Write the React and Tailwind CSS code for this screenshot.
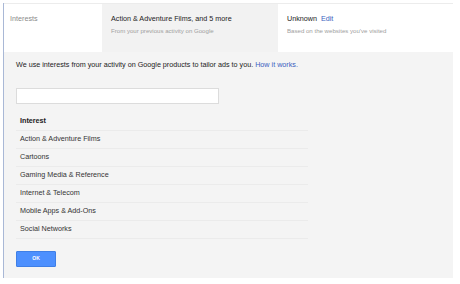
const interests = [
  'Action & Adventure Films',
  'Cartoons',
  'Gaming Media & Reference',
  'Internet & Telecom',
  'Mobile Apps & Add-Ons',
  'Social Networks',
];

export default function App() {
  return (
    <div className="w-[460px] h-[284px] bg-white pt-[3px] pl-[3px] font-['Liberation_Sans',Arial,sans-serif]">
      <div className="w-[450px] h-[275px] border-l border-[#a9b8d6] bg-[#f4f4f4] flex flex-col">
        {/* tabs */}
        <div className="flex h-[49px] border-t border-[#ececec]">
          <div className="w-[98px] bg-white pl-[6px] pt-[10px]">
            <div className="text-[7.2px] text-[#8a8a8a]">Interests</div>
          </div>
          <div className="w-[176px] bg-[#f2f2f2] pl-[9px] pt-[10px]">
            <div className="text-[7.2px] text-[#222]">Action &amp; Adventure Films, and 5 more</div>
            <div className="text-[6.1px] text-[#a0a0a0] mt-[1px]">From your previous activity on Google</div>
          </div>
          <div className="flex-1 bg-white pl-[9px] pt-[10px]">
            <div className="text-[7.2px] text-[#222]">
              Unknown <span className="text-[#3b5fc0] ml-[2px]">Edit</span>
            </div>
            <div className="text-[6.1px] text-[#a0a0a0] mt-[1px]">Based on the websites you've visited</div>
          </div>
        </div>

        {/* content */}
        <div className="pl-[12px] pt-[8px]">
          <p className="text-[7.2px] text-[#222]">
            We use interests from your activity on Google products to tailor ads to you.{' '}
            <span className="text-[#3b5fc0]">How it works.</span>
          </p>
          <div className="mt-[17px] w-[203px] h-[16px] bg-white border border-[#dcdcdc]" />

          <div className="mt-[9px] w-[292px]">
            <div className="h-[18px] flex items-center pl-[4px] text-[7.2px] font-bold text-[#222] border-b border-[#ebebeb]">
              Interest
            </div>
            {interests.map((name) => (
              <div
                key={name}
                className="h-[18px] flex items-center pl-[4px] text-[7.2px] text-[#333] border-b border-[#ebebeb]"
              >
                {name}
              </div>
            ))}
          </div>

          <button className="mt-[12px] w-[40px] h-[16px] bg-[#4d90fe] border border-[#3f7fe6] rounded-[1px] text-white text-[5px] font-bold">
            OK
          </button>
        </div>
      </div>
    </div>
  );
}
